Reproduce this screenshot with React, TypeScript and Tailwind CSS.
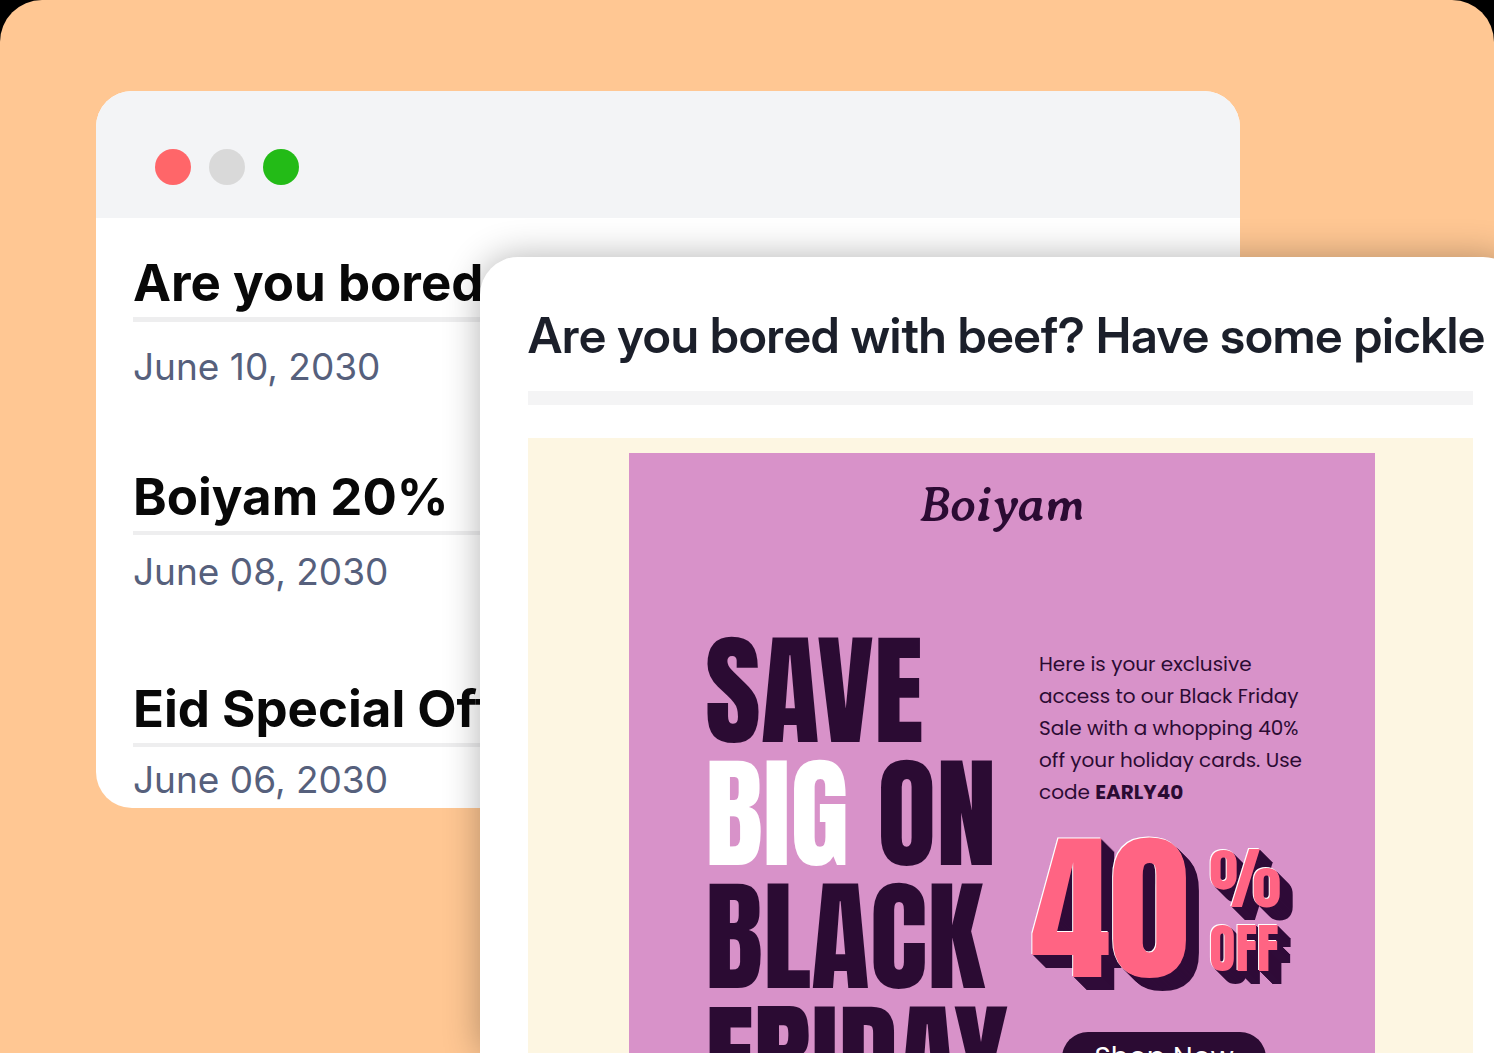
const emails = [
  { subject: 'Are you bored with', date: 'June 10, 2030', rule: 'h-[5px] mb-[21px]', row: 'h-[214px]' },
  { subject: 'Boiyam 20%', date: 'June 08, 2030', rule: 'h-1 mb-[13px]', row: 'h-[212px]' },
  { subject: 'Eid Special Offer', date: 'June 06, 2030', rule: 'h-1 mb-[9px]', row: '' },
];

const extrude =
  '[text-shadow:-1px_-1px_0_#fff,1px_1px_0_#2f0b38,2px_2px_0_#2f0b38,3px_3px_0_#2f0b38,4px_4px_0_#2f0b38,5px_5px_0_#2f0b38,6px_6px_0_#2f0b38,7px_7px_0_#2f0b38,8px_8px_0_#2f0b38,9px_9px_0_#2f0b38,10px_10px_0_#2f0b38,11px_11px_0_#2f0b38,12px_12px_0_#2f0b38,13px_13px_0_#2f0b38]';

function Inbox() {
  return (
    <section className="col-start-1 row-start-1 mt-[91px] mr-[254px] ml-24 self-start overflow-hidden rounded-[36px] bg-white">
      <header className="flex h-[127px] gap-[18px] bg-[#f3f4f6] px-[59px] pt-[58px]">
        <button type="button" aria-label="Close" className="size-9 rounded-full bg-[#ff6669]" />
        <button type="button" aria-label="Minimize" className="size-9 rounded-full bg-[#d9d9d9]" />
        <button type="button" aria-label="Maximize" className="size-9 rounded-full bg-[#23bb17]" />
      </header>
      <ul className="px-[37px] pt-[35px] pb-1">
        {emails.map((e) => (
          <li key={e.date} className={e.row}>
            <h2 className="pb-1 text-[51px] leading-[60px] font-bold whitespace-nowrap text-[#080808]">{e.subject}</h2>
            <div className={`bg-[#eeeeef] ${e.rule}`} />
            <p className="text-[37px] leading-[48px] text-[#56607c]">{e.date}</p>
          </li>
        ))}
      </ul>
    </section>
  );
}

function Poster() {
  return (
    <article className="mr-[98px] ml-[101px] flex-1 bg-[#d892c9] pr-16 pl-[76px] text-[#2b0b33]">
      <p className="pt-6 pr-3 text-center font-['Averia_Serif_Libre','DejaVu_Serif',serif] text-[50px] leading-[56px] font-bold italic">
        Boiyam
      </p>
      <div className="mt-[97px] grid grid-cols-[334px_1fr]">
        <h2 className="font-['Anton','Roboto_Condensed',sans-serif] text-[121px] leading-[123px] font-normal whitespace-nowrap">
          SAVE
          <br />
          <span className="text-white">BIG</span> ON
          <br />
          BLACK
          <br />
          FRIDAY
        </h2>
        <div className="font-['Poppins','Lato',sans-serif]">
          <p className="mt-[18px] w-[270px] text-xl leading-8">
            Here is your exclusive
            <br />
            access to our Black Friday
            <br />
            Sale with a whopping 40%
            <br />
            off your holiday cards. Use
            <br />
            code <strong className="font-bold">EARLY40</strong>
          </p>
          <div className={`mt-[22px] -ml-2 flex font-['Anton','Roboto_Condensed',sans-serif] text-[#ff6483] ${extrude}`}>
            <span className="text-[160px] leading-[160px]">40</span>
            <span className="ml-5 flex flex-col pt-[10px]">
              <span className="text-[68px] leading-[76px]">%</span>
              <span className="text-[54px] leading-[64px]">OFF</span>
            </span>
          </div>
          <button type="button" className="mt-[42px] ml-[23px] h-[52px] w-[204px] rounded-full bg-[#2b0b33] text-[28px] text-white">
            Shop Now
          </button>
        </div>
      </div>
    </article>
  );
}

function Message() {
  return (
    <section className="z-10 col-start-1 row-start-1 mt-[257px] -mr-[27px] ml-[480px] flex flex-col rounded-t-[38px] bg-white px-12 pt-[49px] shadow-[0_0_36px_rgba(0,0,0,0.3)]">
      <h1 className="font-['Inter_Display','Inter',sans-serif] text-[49px] leading-[60px] font-semibold whitespace-nowrap text-[#1b1f2a]">
        Are you bored with beef? Have some pickle
      </h1>
      <div className="mt-[25px] h-[14px] shrink-0 bg-[#f4f4f5]" />
      <div className="mt-[33px] flex flex-1 flex-col bg-[#fdf6e2] pt-[15px]">
        <Poster />
      </div>
    </section>
  );
}

export default function App() {
  return (
    <div className="h-screen overflow-hidden bg-black font-['Inter',sans-serif]">
      <main className="grid h-full grid-cols-1 grid-rows-1 overflow-hidden rounded-t-[42px] bg-[#ffc793]">
        <Inbox />
        <Message />
      </main>
    </div>
  );
}
